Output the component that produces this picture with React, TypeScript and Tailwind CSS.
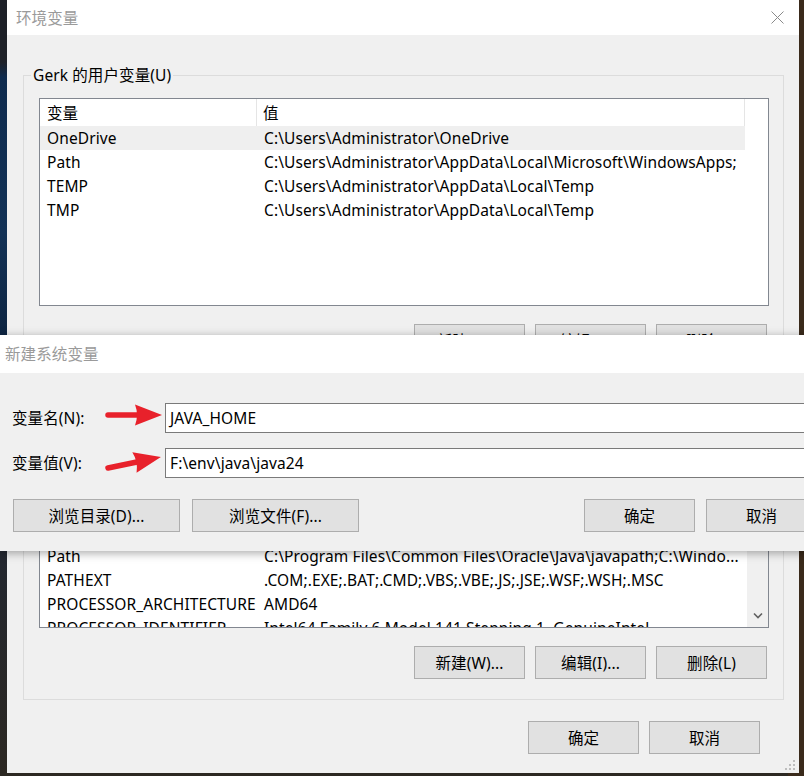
import React from "react";

// rows of the two list views
type EnvRow = { name: string; value: string };

const userRows: EnvRow[] = [
  { name: "OneDrive", value: "C:\\Users\\Administrator\\OneDrive" },
  { name: "Path", value: "C:\\Users\\Administrator\\AppData\\Local\\Microsoft\\WindowsApps;" },
  { name: "TEMP", value: "C:\\Users\\Administrator\\AppData\\Local\\Temp" },
  { name: "TMP", value: "C:\\Users\\Administrator\\AppData\\Local\\Temp" },
];

const systemRows: EnvRow[] = [
  { name: "ComSpec", value: "C:\\Windows\\system32\\cmd.exe" },
  { name: "DriverData", value: "C:\\Windows\\System32\\Drivers\\DriverData" },
  { name: "NUMBER_OF_PROCESSORS", value: "8" },
  { name: "OS", value: "Windows_NT" },
  { name: "Path", value: "C:\\Program Files\\Common Files\\Oracle\\Java\\javapath;C:\\Windo..." },
  { name: "PATHEXT", value: ".COM;.EXE;.BAT;.CMD;.VBS;.VBE;.JS;.JSE;.WSF;.WSH;.MSC" },
  { name: "PROCESSOR_ARCHITECTURE", value: "AMD64" },
  { name: "PROCESSOR_IDENTIFIER", value: "Intel64 Family 6 Model 141 Stepping 1, GenuineIntel" },
  { name: "PROCESSOR_LEVEL", value: "6" },
];

const WinButton = ({ label, className = "" }: { label: string; className?: string }) => (
  <div
    className={`h-[33px] flex items-center justify-center bg-[#e1e1e1] border border-[#adadad] text-black ${className}`}
  >
    {label}
  </div>
);

const EnvList = ({ rows, selected, scrollbar }: { rows: EnvRow[]; selected?: number; scrollbar?: boolean }) => (
  <div className="relative w-[730px] h-[208px] bg-white border border-[#828790] overflow-hidden">
    <div className="flex h-[27px] items-center">
      <div className="w-[217px] h-full flex items-center pl-[7px] border-r border-[#e5e5e5]">变量</div>
      <div className="w-[488px] h-full flex items-center pl-[6px] border-r border-[#e5e5e5]">值</div>
    </div>
    {rows.map((row, i) => (
      <div
        key={row.name + i}
        className={`flex h-[24px] w-[705px] items-center whitespace-nowrap ${i === selected ? "bg-[#efefef]" : ""}`}
      >
        <div className="w-[217px] pl-[7px] overflow-hidden">{row.name}</div>
        <div className="w-[488px] pl-[7px] overflow-hidden">{row.value}</div>
      </div>
    ))}
    {scrollbar && (
      <div className="absolute right-0 top-0 bottom-0 w-[21px] bg-[#f0f0f0] flex items-end justify-center pb-[8px]">
        <svg width="10" height="7" viewBox="0 0 10 7">
          <path d="M1 1.5 L5 5.5 L9 1.5" fill="none" stroke="#606060" strokeWidth="1.6" />
        </svg>
      </div>
    )}
  </div>
);

const GroupBox = ({ title, children, className = "" }: { title: string; children: React.ReactNode; className?: string }) => (
  <div className={`relative ml-4 w-[761px] border border-[#dcdcdc] pt-[22px] pb-[20px] pl-[15px] ${className}`}>
    <div className="absolute -top-[11px] left-[7px] px-[2px] bg-[#f0f0f0] leading-[20px]">{title}</div>
    {children}
  </div>
);

const RedArrow = ({ transform }: { transform: string }) => (
  <g transform={transform}>
    <line x1="0" y1="0" x2="32" y2="0" stroke="#e8212b" strokeWidth="5.5" strokeLinecap="round" />
    <path d="M54 0 L27 -10.5 Q31 0 27 10.5 Z" fill="#e8212b" />
  </g>
);

const App = () => {
  return (
    <div className="relative w-[804px] h-[776px] overflow-hidden font-['Microsoft_YaHei_UI','Noto_Sans','Noto_Sans_CJK_SC',sans-serif] text-[15.5px] tracking-[0.1px] leading-[20px] text-black bg-[linear-gradient(90deg,transparent_98%,#3a2a1b_98%),linear-gradient(180deg,#1e2128_0%,#1e2128_8%,#0f2b4e_10%,#133256_30%,#0e2542_43%,#23272f_72%,#2c2822_100%)]">
      {/* 环境变量 main window */}
      <div className="absolute left-[7px] top-0 w-[792px] h-[773px] bg-[#f0f0f0] flex flex-col">
        <div className="h-[35px] shrink-0 bg-white flex items-center justify-between pl-[9px] pr-[15px]">
          <span className="text-[#9a9a9a]">环境变量</span>
          <svg width="13" height="13" viewBox="0 0 13 13">
            <path d="M0.5 0.5 L12.5 12.5 M12.5 0.5 L0.5 12.5" stroke="#8a8a8a" strokeWidth="1" />
          </svg>
        </div>

        <GroupBox title="Gerk 的用户变量(U)" className="mt-[40px]">
          <EnvList rows={userRows} selected={0} />
          <div className="w-[728px] flex justify-end gap-[10px] mt-[18px]">
            <WinButton label="新建(N)..." className="w-[111px]" />
            <WinButton label="编辑(E)..." className="w-[111px]" />
            <WinButton label="删除(D)" className="w-[111px]" />
          </div>
        </GroupBox>

        <GroupBox title="系统变量(S)" className="mt-[19px]">
          <EnvList rows={systemRows} scrollbar />
          <div className="w-[728px] flex justify-end gap-[10px] mt-[18px]">
            <WinButton label="新建(W)..." className="w-[111px]" />
            <WinButton label="编辑(I)..." className="w-[111px]" />
            <WinButton label="删除(L)" className="w-[111px]" />
          </div>
        </GroupBox>

        <div className="flex justify-end gap-[10px] mt-[21px] pr-[39px]">
          <WinButton label="确定" className="w-[111px]" />
          <WinButton label="取消" className="w-[111px]" />
        </div>

        {/* resize grip */}
        <svg className="absolute right-[3px] bottom-[2px]" width="12" height="12" viewBox="0 0 12 12">
          <rect x="9" y="1" width="2" height="2" fill="#bdbdbd" />
          <rect x="5" y="5" width="2" height="2" fill="#bdbdbd" />
          <rect x="9" y="5" width="2" height="2" fill="#bdbdbd" />
          <rect x="1" y="9" width="2" height="2" fill="#bdbdbd" />
          <rect x="5" y="9" width="2" height="2" fill="#bdbdbd" />
          <rect x="9" y="9" width="2" height="2" fill="#bdbdbd" />
        </svg>
      </div>

      {/* 新建系统变量 dialog */}
      <div className="absolute left-0 top-[335px] w-[830px] h-[216px] bg-[#f0f0f0] shadow-[0_2px_9px_rgba(0,0,0,0.35)] flex flex-col">
        <div className="h-[38px] shrink-0 bg-white flex items-center pl-[5px]">
          <span className="text-[#9a9a9a]">新建系统变量</span>
        </div>
        <div className="flex flex-col pt-[30px] pl-[12px] pr-[13px]">
          <div className="flex items-center h-[30px]">
            <div className="w-[153px]">变量名(N):</div>
            <div className="w-[652px] h-[30px] bg-white border border-[#7a7a7a] flex items-center pl-[4px]">JAVA_HOME</div>
          </div>
          <div className="flex items-center h-[30px] mt-[15px]">
            <div className="w-[153px]">变量值(V):</div>
            <div className="w-[652px] h-[30px] bg-white border border-[#7a7a7a] flex items-center pl-[4px]">
              F:\env\java\java24
            </div>
          </div>
          <div className="flex justify-between mt-[21px] pl-[1px]">
            <div className="flex gap-[12px]">
              <WinButton label="浏览目录(D)..." className="w-[167px]" />
              <WinButton label="浏览文件(F)..." className="w-[167px]" />
            </div>
            <div className="flex gap-[11px]">
              <WinButton label="确定" className="w-[111px]" />
              <WinButton label="取消" className="w-[111px]" />
            </div>
          </div>
        </div>
      </div>

      {/* annotation arrows */}
      <svg className="absolute left-[100px] top-[395px]" width="70" height="85" viewBox="0 0 70 85">
        <RedArrow transform="translate(8,20)" />
        <RedArrow transform="translate(8,73) rotate(-11.7)" />
      </svg>
    </div>
  );
};

export default App;
